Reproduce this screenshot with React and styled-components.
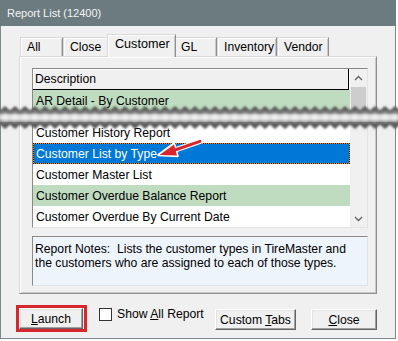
import React from 'react';
import styled, { createGlobalStyle } from 'styled-components';

const Global = createGlobalStyle`
  html, body { margin: 0; padding: 0; background: #ffffff; }
  body { font-family: "Liberation Sans", Arial, sans-serif; font-size: 12.2px; color: #000; }
  * { box-sizing: border-box; }
`;

const Window = styled.div`
  position: relative;
  width: 396px;
  height: 339px;
  display: flex;
  flex-direction: column;
`;

const TitleBar = styled.div`
  height: 26px;
  flex: none;
  background: #6b7b7f;
  color: #f4f4f4;
  font-size: 11px;
  padding-left: 7px;
  display: flex;
  align-items: center;
`;

const Body = styled.div`
  flex: 1;
  background: #f0f0f0;
  border-left: 1px solid #7c8a8e;
  border-right: 1px solid #7c8a8e;
  border-bottom: 1px solid #7c8a8e;
  padding: 8px 18px 5px 18px;
  display: flex;
  flex-direction: column;
`;

const TabStrip = styled.div`
  display: flex;
  align-items: flex-end;
  height: 23px;
  margin-bottom: -1px;
  padding-left: 1px;
  position: relative;
  z-index: 1;
`;

const Tab = styled.div`
  width: ${p => p.$w}px;
  height: ${p => (p.$active ? 23 : 19)}px;
  margin: ${p => (p.$active ? '0 -2px 0 -2px' : '0 0 1px 0')};
  padding: ${p => (p.$active ? '2px 0 0 7px' : '2px 0 0 6px')};
  font-size: ${p => (p.$active ? '12.6px' : '12.2px')};
  background: #f0f0f0;
  border-top: 1px solid #d9d9d9;
  border-left: 1px solid #d9d9d9;
  border-right: 1px solid #8f8f8f;
  box-shadow: inset 1px 1px 0 #ffffff, inset -1px 0 0 #c9c9c9;
  position: relative;
  z-index: ${p => (p.$active ? 2 : 1)};
  line-height: 15px;
  white-space: nowrap;
`;

const Panel = styled.div`
  height: 238px;
  border-top: 1px solid #d9d9d9;
  border-left: 1px solid #d9d9d9;
  border-right: 1px solid #8f8f8f;
  border-bottom: 1px solid #8f8f8f;
  box-shadow: inset 1px 1px 0 #ffffff, inset -1px -1px 0 #c9c9c9;
  padding: 11px 0 0 12px;
  display: flex;
  flex-direction: column;
  gap: 8px;
`;

const ListBox = styled.div`
  width: 336px;
  height: 160px;
  border-top: 1px solid #8a8a8a;
  border-left: 1px solid #8a8a8a;
  border-right: 1px solid #e3e3e3;
  border-bottom: 1px solid #e3e3e3;
  background: #ffffff;
  display: flex;
`;

const Rows = styled.div`
  flex: 1;
  display: flex;
  flex-direction: column;
`;

const Header = styled.div`
  height: 21px;
  margin-right: 1px;
  background: #f0f0f0;
  border-bottom: 1px solid #000;
  border-right: 1px solid #000;
  box-shadow: inset 1px 1px 0 #ffffff;
  padding-left: 2px;
  display: flex;
  align-items: center;
`;

const Row = styled.div`
  height: 21px;
  flex: none;
  padding-left: 3px;
  display: flex;
  align-items: center;
  white-space: nowrap;
  overflow: hidden;
  background: ${p => (p.$sel ? '#0078d7' : p.$green ? '#c0dcc0' : '#ffffff')};
  color: ${p => (p.$sel ? '#ffffff' : '#000')};
  ${p => p.$sel && `
    box-shadow: inset 0 0 0 1px #f7922a;
    outline: 1px dotted #111;
    outline-offset: -1px;
  `}
`;

const Gap = styled.div`
  height: 11px;
  flex: none;
`;

const ScrollBar = styled.div`
  width: 17px;
  background: #f0f0f0;
  display: flex;
  flex-direction: column;
  align-items: center;
`;

const ScrollBtn = styled.div`
  height: 17px;
  width: 17px;
  flex: none;
  display: flex;
  align-items: center;
  justify-content: center;
`;

const Thumb = styled.div`
  width: 15px;
  height: 24px;
  margin-top: 1px;
  background: #cdcdcd;
`;

const Track = styled.div`
  flex: 1;
`;

const Notes = styled.div`
  width: 336px;
  height: 50px;
  background: #eef4fb;
  border-top: 1px solid #8a8a8a;
  border-left: 1px solid #8a8a8a;
  border-right: 1px solid #e3e3e3;
  border-bottom: 1px solid #e3e3e3;
  padding: 5px 0 0 2px;
  line-height: 14px;
  white-space: pre;
`;

const ButtonRow = styled.div`
  display: flex;
  align-items: flex-start;
  margin-top: 11px;
  margin-left: -3px;
  height: 28px;
`;

const Highlight = styled.div`
  border: 3px solid #d6262e;
  padding-right: 1px;
  display: flex;
`;

const Button = styled.div`
  width: ${p => p.$w}px;
  height: 21px;
  margin-top: ${p => p.$top || 0}px;
  margin-left: ${p => p.$ml || '0'};
  background: #f0f0f0;
  border-top: 1px solid #ffffff;
  border-left: 1px solid #ffffff;
  border-right: 1px solid #646464;
  border-bottom: 1px solid #646464;
  box-shadow: inset -1px -1px 0 #a0a0a0, inset 1px 1px 0 #e3e3e3;
  display: flex;
  align-items: center;
  justify-content: center;
  white-space: pre;
`;

const CheckGroup = styled.div`
  display: flex;
  align-items: center;
  margin-left: 12px;
  margin-top: 2px;
  gap: 5px;
  white-space: nowrap;
`;

const CheckBox = styled.div`
  width: 13px;
  height: 13px;
  background: #ffffff;
  border: 1px solid #333333;
`;

const U = styled.span`
  text-decoration: underline;
  text-underline-offset: 1px;
`;

const Overlay = styled.svg`
  position: absolute;
  left: 0;
  top: ${p => p.$top}px;
  pointer-events: none;
  z-index: 5;
`;

const zig = (a, b, from, to, step) => {
  const pts = [];
  let i = 0;
  for (let x = from; x <= to; x += step, i++) pts.push(`${x},${i % 2 ? b : a}`);
  return pts;
};

function Tear() {
  const outer = [...zig(2, 6.5, -5, 405, 5), ...zig(25, 20.5, -5, 405, 5).reverse()].join(' ');
  const inner = [...zig(8, 12, -5, 405, 5), ...zig(18, 14, -5, 405, 5).reverse()].join(' ');
  return (
    <Overlay $top={104} width="398" height="28" viewBox="0 0 398 28">
      <defs>
        <filter id="soft" x="-5%" y="-50%" width="110%" height="200%">
          <feGaussianBlur stdDeviation="0.85" />
        </filter>
        <filter id="wide" x="-5%" y="-50%" width="110%" height="200%">
          <feGaussianBlur stdDeviation="2.4" />
        </filter>
        <clipPath id="tearClip">
          <polygon points={outer} />
        </clipPath>
      </defs>
      <polygon points={outer} fill="#555555" filter="url(#soft)" />
      <g clipPath="url(#tearClip)">
        <polygon points={inner} fill="#ffffff" filter="url(#wide)" />
        <rect x="0" y="12" width="398" height="4" fill="#ffffff" filter="url(#wide)" />
      </g>
    </Overlay>
  );
}

function Arrow() {
  return (
    <Overlay $top={136} width="60" height="26" viewBox="156 136 60 26" style={{ left: 156 }}>
      <g>
        <line x1="201" y1="141" x2="172" y2="151" stroke="#ffffff" strokeWidth="5.5" strokeLinecap="round" />
        <polygon points="158.5,155 174,143.5 177.5,156" fill="#ffffff" stroke="#ffffff" strokeWidth="2.5" strokeLinejoin="round" />
        <line x1="200" y1="141.3" x2="172" y2="151" stroke="#d8262c" strokeWidth="3" strokeLinecap="round" />
        <polygon points="159.5,155 174,144.5 177,155.5" fill="#d8262c" />
      </g>
    </Overlay>
  );
}

const Chevron = ({ up }) => (
  <svg width="9" height="6" viewBox="0 0 9 6">
    <polyline
      points={up ? '1,5 4.5,1.5 8,5' : '1,1 4.5,4.5 8,1'}
      fill="none"
      stroke="#606060"
      strokeWidth="1.3"
    />
  </svg>
);

const tabs = [
  { label: 'All', w: 43 },
  { label: 'Close', w: 46 },
  { label: 'Customer', w: 69, active: true },
  { label: 'GL', w: 43 },
  { label: 'Inventory', w: 60 },
  { label: 'Vendor', w: 52 },
];

export default function App() {
  return (
    <>
      <Global />
      <Window>
        <TitleBar>Report List (12400)</TitleBar>
        <Body>
          <TabStrip>
            {tabs.map(t => (
              <Tab key={t.label} $w={t.w} $active={t.active}>{t.label}</Tab>
            ))}
          </TabStrip>
          <Panel>
            <ListBox>
              <Rows>
                <Header>Description</Header>
                <Row $green>AR Detail - By Customer</Row>
                <Gap />
                <Row>Customer History Report</Row>
                <Row $sel>Customer List by Type</Row>
                <Row>Customer Master List</Row>
                <Row $green>Customer Overdue Balance Report</Row>
                <Row>Customer Overdue By Current Date</Row>
              </Rows>
              <ScrollBar>
                <ScrollBtn><Chevron up /></ScrollBtn>
                <Thumb />
                <Track />
                <ScrollBtn><Chevron /></ScrollBtn>
              </ScrollBar>
            </ListBox>
            <Notes>{'Report Notes:  Lists the customer types in TireMaster and\nthe customers who are assigned to each of those types.'}</Notes>
          </Panel>
          <ButtonRow>
            <Highlight>
              <Button $w={64}><span><U>L</U>aunch</span></Button>
            </Highlight>
            <CheckGroup>
              <CheckBox />
              <span>Show <U>A</U>ll Report</span>
            </CheckGroup>
            <Button $w={81} $top={4} $ml="auto"><span>Custom <U>T</U>abs</span></Button>
            <Button $w={66} $top={4} $ml="15px"><span><U>C</U>lose</span></Button>
          </ButtonRow>
        </Body>
        <Tear />
        <Arrow />
      </Window>
    </>
  );
}
